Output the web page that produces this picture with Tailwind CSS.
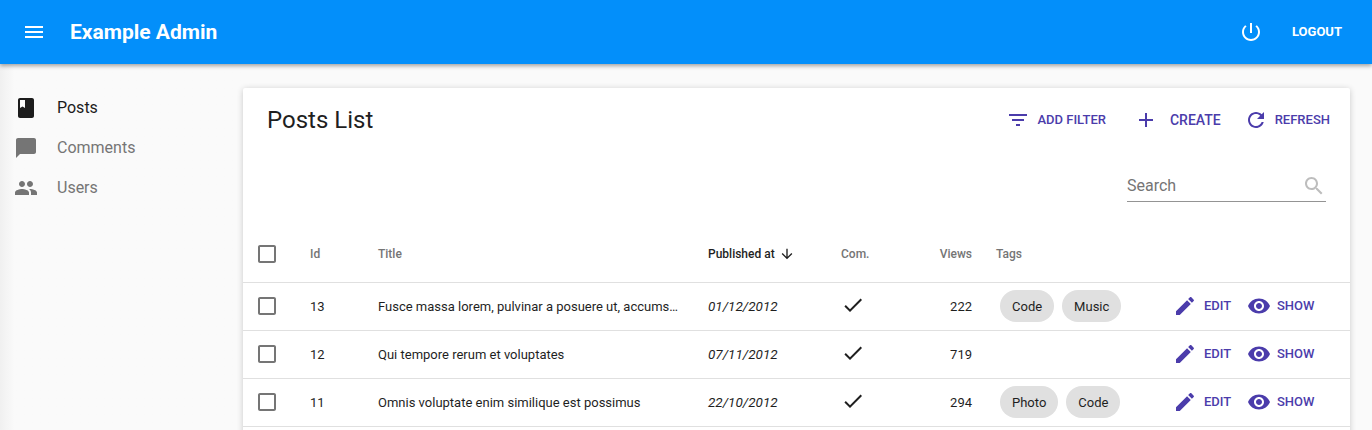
<!DOCTYPE html>
<html>
<head>
<meta charset="utf-8">
<script src="https://cdn.jsdelivr.net/npm/@tailwindcss/browser@4"></script>
</head>
<body class="h-[430px] overflow-hidden bg-[#fafafa] font-['Roboto',sans-serif] text-[#1f1f1f]">
<header class="relative z-10 flex h-16 items-center bg-[#038ffa] pr-[30px] text-white shadow-[0_2px_4px_rgba(0,0,0,0.35)]">
  <svg class="ml-[22px] size-6 fill-current" viewBox="0 0 24 24"><path d="M3 18h18v-2H3v2zm0-5h18v-2H3v2zm0-7v2h18V6H3z"/></svg>
  <h1 class="ml-6 text-[21px] font-bold leading-none">Example Admin</h1>
  <svg class="ml-auto size-6 fill-current" viewBox="0 0 24 24"><path d="M13 3h-2v10h2V3zm4.83 2.17l-1.42 1.42C17.99 7.86 19 9.81 19 12c0 3.87-3.13 7-7 7s-7-3.13-7-7c0-2.19 1.01-4.14 2.58-5.42L6.17 5.17C4.23 6.82 3 9.26 3 12c0 4.97 4.03 9 9 9s9-4.03 9-9c0-2.74-1.23-5.18-3.17-6.83z"/></svg>
  <span class="ml-[29px] text-[13px] font-bold">LOGOUT</span>
</header>
<div class="flex h-[366px] overflow-hidden">
  <nav class="w-[243px] shrink-0 bg-gradient-to-r from-[#f0f0f0] to-[#fafafa] to-[6%] pt-6 text-base text-[#757575]">
    <a class="flex h-10 items-center gap-[19px] pl-[14px] text-[#1c1c1c]"><svg class="size-6 fill-current" viewBox="0 0 24 24"><path d="M18 2H6c-1.1 0-2 .9-2 2v16c0 1.1.9 2 2 2h12c1.1 0 2-.9 2-2V4c0-1.1-.9-2-2-2zM6 4h5v8l-2.5-1.5L6 12V4z"/></svg>Posts</a>
    <a class="flex h-10 items-center gap-[19px] pl-[14px]"><svg class="size-6 fill-current" viewBox="0 0 24 24"><path d="M20 2H4c-1.1 0-1.99.9-1.99 2L2 22l4-4h14c1.1 0 2-.9 2-2V4c0-1.1-.9-2-2-2z"/></svg>Comments</a>
    <a class="flex h-10 items-center gap-[19px] pl-[14px]"><svg class="size-6 fill-current" viewBox="0 0 24 24"><path d="M16 11c1.66 0 2.99-1.34 2.99-3S17.66 5 16 5c-1.66 0-3 1.34-3 3s1.34 3 3 3zm-8 0c1.66 0 2.99-1.34 2.99-3S9.66 5 8 5C6.34 5 5 6.34 5 8s1.34 3 3 3zm0 2c-2.33 0-7 1.17-7 3.5V19h14v-2.5c0-2.33-4.67-3.5-7-3.5zm8 0c-.29 0-.62.02-.97.05 1.16.84 1.97 1.97 1.97 3.45V19h6v-2.5c0-2.33-4.67-3.5-7-3.5z"/></svg>Users</a>
  </nav>
  <main class="mt-6 h-[400px] w-[1107px] shrink-0 rounded-[2px] bg-white shadow-[0_1px_6px_rgba(0,0,0,0.2)]">
    <div class="flex h-[62px] items-center pl-6 pr-5 pt-[2px] text-[#4b3cab]">
      <h2 class="text-2xl text-[#1f1f1f]">Posts List</h2>
      <svg class="ml-auto size-6 fill-current" viewBox="0 0 24 24"><path d="M10 18h4v-2h-4v2zM3 6v2h18V6H3zm3 7h12v-2H6v2z"/></svg>
      <span class="ml-[7px] text-[13px] font-medium">ADD FILTER</span>
      <svg class="ml-[28px] size-6 fill-current" viewBox="0 0 24 24"><path d="M19 13h-6v6h-2v-6H5v-2h6V5h2v6h6v2z"/></svg>
      <span class="ml-3 text-sm font-medium">CREATE</span>
      <svg class="ml-[23px] size-6 fill-current" viewBox="0 0 24 24"><path d="M17.65 6.35C16.2 4.9 14.21 4 12 4c-4.42 0-7.99 3.58-7.99 8s3.57 8 7.99 8c3.73 0 6.84-2.55 7.73-6h-2.08c-.82 2.33-3.04 4-5.65 4-3.31 0-6-2.69-6-6s2.69-6 6-6c1.66 0 3.14.69 4.22 1.78L13 11h7V4l-2.35 2.35z"/></svg>
      <span class="ml-[7px] text-[13px] font-medium">REFRESH</span>
    </div>
    <div class="flex h-[82px] justify-end pr-6">
      <div class="mt-5 flex h-8 w-[199px] items-center justify-between border-b border-[#949494] text-base text-[#757575]">
        <span>Search</span>
        <svg class="size-6 fill-[#bdbdbd]" viewBox="0 0 24 24"><path d="M15.5 14h-.79l-.28-.27C15.41 12.59 16 11.11 16 9.5 16 5.91 13.09 3 9.5 3S3 5.91 3 9.5 5.91 16 9.5 16c1.61 0 3.09-.59 4.23-1.57l.27.28v.79l5 4.99L20.49 19l-4.99-5zm-6 0C7.01 14 5 11.99 5 9.5S7.01 5 9.5 5 14 7.01 14 9.5 11.99 14 9.5 14z"/></svg>
      </div>
    </div>
    <div class="grid h-[51px] grid-cols-[67px_68px_330px_133px_131px_201px_1fr] items-center border-b border-[#e0e0e0] pb-[6px] text-xs font-medium text-[#757575]">
      <svg class="ml-3 size-6 fill-[#757575]" viewBox="0 0 24 24"><path d="M19 5v14H5V5h14m0-2H5c-1.1 0-2 .9-2 2v14c0 1.1.9 2 2 2h14c1.1 0 2-.9 2-2V5c0-1.1-.9-2-2-2z"/></svg>
      <span>Id</span>
      <span>Title</span>
      <span class="flex items-center gap-1 text-[#1f1f1f]">Published at<svg class="size-4 fill-current" viewBox="0 0 24 24"><path d="M20 12l-1.41-1.41L13 16.17V4h-2v12.17l-5.58-5.59L4 12l8 8 8-8z"/></svg></span>
      <span class="relative"><span>Com.</span><span class="absolute right-0">Views</span></span>
      <span class="pl-6">Tags</span>
      <span></span>
    </div>
    <div class="grid h-12 grid-cols-[67px_68px_330px_133px_131px_201px_1fr] items-center border-b border-[#e0e0e0] pb-[2px] text-[13px]">
      <svg class="ml-3 size-6 fill-[#757575]" viewBox="0 0 24 24"><path d="M19 5v14H5V5h14m0-2H5c-1.1 0-2 .9-2 2v14c0 1.1.9 2 2 2h14c1.1 0 2-.9 2-2V5c0-1.1-.9-2-2-2z"/></svg>
      <span class="pt-[2px]">13</span>
      <span class="truncate pr-[28px] pt-[2px]">Fusce massa lorem, pulvinar a posuere ut, accumsan ac nisi</span>
      <span class="pt-[2px] text-[13.5px] italic">01/12/2012</span>
      <span class="relative flex items-center"><svg class="mb-[2px] size-6 fill-current" viewBox="0 0 24 24"><path d="M9 16.17L4.83 12l-1.42 1.41L9 19 21 7l-1.41-1.41z"/></svg><span class="absolute right-0 top-[4px]">222</span></span>
      <span class="flex gap-2 pl-[28px]"><span class="flex h-8 items-center rounded-full bg-[#e0e0e0] px-3 pt-[2px]">Code</span><span class="flex h-8 items-center rounded-full bg-[#e0e0e0] px-3 pt-[2px]">Music</span></span>
      <span class="flex items-center text-[13px] font-medium text-[#4b3cab]"><svg class="size-6 fill-current" viewBox="0 0 24 24"><path d="M3 17.25V21h3.75L17.81 9.94l-3.75-3.75L3 17.25zM20.71 7.04c.39-.39.39-1.02 0-1.41l-2.34-2.34c-.39-.39-1.02-.39-1.41 0l-1.83 1.83 3.75 3.75 1.83-1.83z"/></svg><span class="ml-[7px] w-[43px]">EDIT</span><svg class="size-6 fill-current" viewBox="0 0 24 24"><path d="M12 4.5C7 4.5 2.73 7.61 1 12c1.73 4.39 6 7.5 11 7.5s9.27-3.11 11-7.5c-1.73-4.39-6-7.5-11-7.5zM12 17c-2.76 0-5-2.24-5-5s2.24-5 5-5 5 2.24 5 5-2.24 5-5 5zm0-8c-1.66 0-3 1.34-3 3s1.34 3 3 3 3-1.34 3-3-1.34-3-3-3z"/></svg><span class="ml-1.5">SHOW</span></span>
    </div>
    <div class="grid h-12 grid-cols-[67px_68px_330px_133px_131px_201px_1fr] items-center border-b border-[#e0e0e0] pb-[2px] text-[13px]">
      <svg class="ml-3 size-6 fill-[#757575]" viewBox="0 0 24 24"><path d="M19 5v14H5V5h14m0-2H5c-1.1 0-2 .9-2 2v14c0 1.1.9 2 2 2h14c1.1 0 2-.9 2-2V5c0-1.1-.9-2-2-2z"/></svg>
      <span class="pt-[2px]">12</span>
      <span class="truncate pr-[28px] pt-[2px]">Qui tempore rerum et voluptates</span>
      <span class="pt-[2px] text-[13.5px] italic">07/11/2012</span>
      <span class="relative flex items-center"><svg class="mb-[2px] size-6 fill-current" viewBox="0 0 24 24"><path d="M9 16.17L4.83 12l-1.42 1.41L9 19 21 7l-1.41-1.41z"/></svg><span class="absolute right-0 top-[4px]">719</span></span>
      <span></span>
      <span class="flex items-center text-[13px] font-medium text-[#4b3cab]"><svg class="size-6 fill-current" viewBox="0 0 24 24"><path d="M3 17.25V21h3.75L17.81 9.94l-3.75-3.75L3 17.25zM20.71 7.04c.39-.39.39-1.02 0-1.41l-2.34-2.34c-.39-.39-1.02-.39-1.41 0l-1.83 1.83 3.75 3.75 1.83-1.83z"/></svg><span class="ml-[7px] w-[43px]">EDIT</span><svg class="size-6 fill-current" viewBox="0 0 24 24"><path d="M12 4.5C7 4.5 2.73 7.61 1 12c1.73 4.39 6 7.5 11 7.5s9.27-3.11 11-7.5c-1.73-4.39-6-7.5-11-7.5zM12 17c-2.76 0-5-2.24-5-5s2.24-5 5-5 5 2.24 5 5-2.24 5-5 5zm0-8c-1.66 0-3 1.34-3 3s1.34 3 3 3 3-1.34 3-3-1.34-3-3-3z"/></svg><span class="ml-1.5">SHOW</span></span>
    </div>
    <div class="grid h-12 grid-cols-[67px_68px_330px_133px_131px_201px_1fr] items-center border-b border-[#e0e0e0] pb-[2px] text-[13px]">
      <svg class="ml-3 size-6 fill-[#757575]" viewBox="0 0 24 24"><path d="M19 5v14H5V5h14m0-2H5c-1.1 0-2 .9-2 2v14c0 1.1.9 2 2 2h14c1.1 0 2-.9 2-2V5c0-1.1-.9-2-2-2z"/></svg>
      <span class="pt-[2px]">11</span>
      <span class="truncate pr-[28px] pt-[2px]">Omnis voluptate enim similique est possimus</span>
      <span class="pt-[2px] text-[13.5px] italic">22/10/2012</span>
      <span class="relative flex items-center"><svg class="mb-[2px] size-6 fill-current" viewBox="0 0 24 24"><path d="M9 16.17L4.83 12l-1.42 1.41L9 19 21 7l-1.41-1.41z"/></svg><span class="absolute right-0 top-[4px]">294</span></span>
      <span class="flex gap-2 pl-[28px]"><span class="flex h-8 items-center rounded-full bg-[#e0e0e0] px-3 pt-[2px]">Photo</span><span class="flex h-8 items-center rounded-full bg-[#e0e0e0] px-3 pt-[2px]">Code</span></span>
      <span class="flex items-center text-[13px] font-medium text-[#4b3cab]"><svg class="size-6 fill-current" viewBox="0 0 24 24"><path d="M3 17.25V21h3.75L17.81 9.94l-3.75-3.75L3 17.25zM20.71 7.04c.39-.39.39-1.02 0-1.41l-2.34-2.34c-.39-.39-1.02-.39-1.41 0l-1.83 1.83 3.75 3.75 1.83-1.83z"/></svg><span class="ml-[7px] w-[43px]">EDIT</span><svg class="size-6 fill-current" viewBox="0 0 24 24"><path d="M12 4.5C7 4.5 2.73 7.61 1 12c1.73 4.39 6 7.5 11 7.5s9.27-3.11 11-7.5c-1.73-4.39-6-7.5-11-7.5zM12 17c-2.76 0-5-2.24-5-5s2.24-5 5-5 5 2.24 5 5-2.24 5-5 5zm0-8c-1.66 0-3 1.34-3 3s1.34 3 3 3 3-1.34 3-3-1.34-3-3-3z"/></svg><span class="ml-1.5">SHOW</span></span>
    </div>
  </main>
</div>
</body>
</html>
